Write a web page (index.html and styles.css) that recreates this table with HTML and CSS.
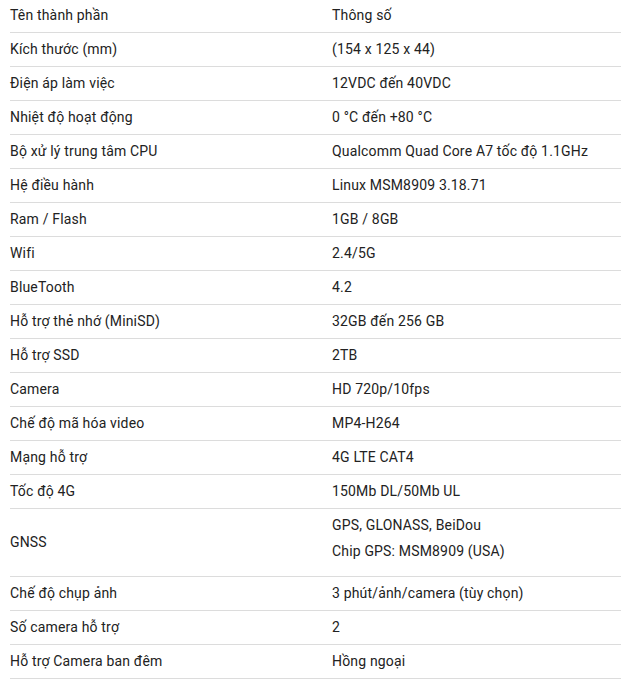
FILE: index.html
```html
<!DOCTYPE html>
<html lang="vi">
<head>
    <meta charset="UTF-8">
    <meta name="viewport" content="width=device-width, initial-scale=1.0">
    <title>Thông số kỹ thuật</title>
    <link rel="stylesheet" href="styles.css">
</head>
<body>
    <table class="spec-table">
        <colgroup>
            <col class="col-name">
            <col>
        </colgroup>
        <tbody>
            <tr><td>Tên thành phần</td><td>Thông số</td></tr>
            <tr><td>Kích thước (mm)</td><td>(154 x 125 x 44)</td></tr>
            <tr><td>Điện áp làm việc</td><td>12VDC đến 40VDC</td></tr>
            <tr><td>Nhiệt độ hoạt động</td><td>0 °C đến +80 °C</td></tr>
            <tr><td>Bộ xử lý trung tâm CPU</td><td>Qualcomm Quad Core A7 tốc độ 1.1GHz</td></tr>
            <tr><td>Hệ điều hành</td><td>Linux MSM8909 3.18.71</td></tr>
            <tr><td>Ram / Flash</td><td>1GB / 8GB</td></tr>
            <tr><td>Wifi</td><td>2.4/5G</td></tr>
            <tr><td>BlueTooth</td><td>4.2</td></tr>
            <tr><td>Hỗ trợ thẻ nhớ (MiniSD)</td><td>32GB đến 256 GB</td></tr>
            <tr><td>Hỗ trợ SSD</td><td>2TB</td></tr>
            <tr><td>Camera</td><td>HD 720p/10fps</td></tr>
            <tr><td>Chế độ mã hóa video</td><td>MP4-H264</td></tr>
            <tr><td>Mạng hỗ trợ</td><td>4G LTE CAT4</td></tr>
            <tr><td>Tốc độ 4G</td><td>150Mb DL/50Mb UL</td></tr>
            <tr>
                <td>GNSS</td>
                <td>
                    <p>GPS, GLONASS, BeiDou</p>
                    <p>Chip GPS: MSM8909 (USA)</p>
                </td>
            </tr>
            <tr><td>Chế độ chụp ảnh</td><td>3 phút/ảnh/camera (tùy chọn)</td></tr>
            <tr><td>Số camera hỗ trợ</td><td>2</td></tr>
            <tr><td>Hỗ trợ Camera ban đêm</td><td>Hồng ngoại</td></tr>
        </tbody>
    </table>
</body>
</html>
```

FILE: styles.css
```css
body {
    font-family: Roboto, "Liberation Sans", sans-serif;
    margin: 0;
    padding: 0;
    background-color: #fff;
    color: #222;
}

.spec-table {
    border-collapse: collapse;
    width: 611px;
    margin: -1px 0 0 10px; /* first row sits a pixel above the top edge */
    font-size: 14px;
    line-height: 17px;
    letter-spacing: 0.17px;
}

.col-name {
    width: 322px;
}

.spec-table td {
    padding: 8px 0;
    border-bottom: 1px solid #dcdcdc;
    vertical-align: middle;
    text-align: left;
}

.spec-table p {
    margin: 0 0 9px;
}

.spec-table p:last-child {
    margin-bottom: 8px;
}
```
